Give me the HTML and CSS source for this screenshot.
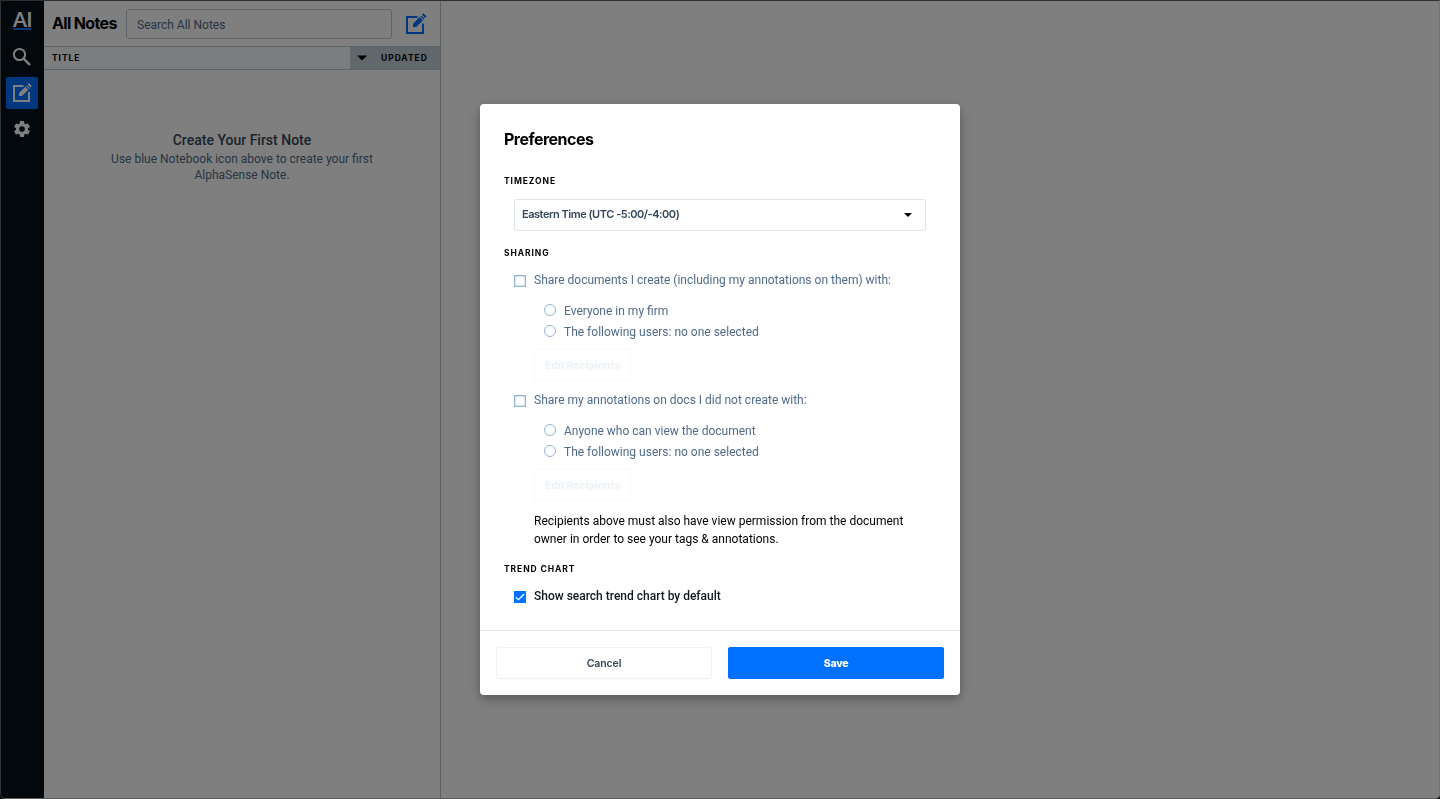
FILE: index.html
```html
<!DOCTYPE html>
<html lang="en">
<head>
<meta charset="utf-8">
<title>Preferences</title>
<link rel="stylesheet" href="styles.css">
</head>
<body>
<div class="app">
  <nav class="rail">
    <div class="logo"><span class="logo-text">AI</span></div>
    <a class="rail-item"><svg width="20" height="20" viewBox="0 0 20 20" fill="none" stroke="#fff" stroke-width="2"><circle cx="7.500" cy="7.500" r="5.600"/><path d="M11.600 11.600L18 18" stroke-width="2.400"/></svg></a>
    <a class="rail-item active"><svg width="20" height="20" viewBox="0 0 20 20"><path d="M11.500 3H2v15h15V9" fill="none" stroke="#fff" stroke-width="2"/><path d="M7 10v3h3l6.300-6.300-3-3zM14 3l3 3 .8-.8-3-3zM15.600 1.500l3 3 .8-.9c.3-.3.300-.7 0-1l-2-2c-.3-.3-.7-.3-1 0z" fill="#fff"/></svg></a>
    <a class="rail-item"><svg width="20" height="20" viewBox="0 0 24 24"><path fill="#fff" d="M19.140 12.940c.04-.3.060-.61.060-.94s-.02-.64-.07-.94l2.030-1.580a.49.49 0 0 0 .12-.61l-1.920-3.320a.488.488 0 0 0-.59-.22l-2.390.96c-.5-.38-1.030-.7-1.620-.94l-.36-2.540a.484.484 0 0 0-.48-.41h-3.840c-.24 0-.43.17-.47.41l-.36 2.540c-.59.24-1.130.57-1.620.94l-2.390-.96c-.22-.08-.47 0-.59.22L2.740 8.870c-.12.21-.08.47.12.61l2.030 1.580c-.05.3-.09.63-.09.94s.02.64.07.94l-2.030 1.580a.49.49 0 0 0-.12.61l1.920 3.320c.12.22.37.29.59.22l2.390-.96c.5.38 1.030.7 1.620.94l.36 2.540c.05.24.24.41.48.41h3.840c.24 0 .44-.17.47-.41l.36-2.540c.59-.24 1.130-.56 1.620-.94l2.390.96c.22.08.47 0 .59-.22l1.920-3.320c.12-.22.070-.47-.12-.61zM12 15.400a3.400 3.400 0 1 1 0-6.800 3.400 3.400 0 0 1 0 6.800z"/></svg></a>
  </nav>
  <section class="notes">
    <header class="notes-head">
      <h1 class="notes-title">All Notes</h1>
      <div class="search">Search All Notes</div>
      <svg class="compose" width="22" height="22" viewBox="0 0 22 22"><path d="M12.500 4H2v16h16v-9.500" fill="none" stroke="#0070ff" stroke-width="2"/><path d="M8 10.700V14h3.300l6.600-6.600-3.300-3.300zM15.300 3.400l3.300 3.300.9-.9-3.300-3.300zM17 1.700L20.300 5l.9-.9c.3-.3.3-.7 0-1L18.900.8c-.3-.3-.7-.3-1 0z" fill="#0070ff"/></svg>
    </header>
    <div class="columns">
      <div class="col-title">TITLE</div>
      <div class="col-updated"><svg width="10" height="6" viewBox="0 0 10 6"><path d="M0 .5h10L5 5.500z" fill="#000"/></svg><span>UPDATED</span></div>
    </div>
    <div class="empty">
      <div class="empty-title">Create Your First Note</div>
      <div class="empty-text">Use blue Notebook icon above to create your first<br>AlphaSense Note.</div>
    </div>
  </section>
  <main class="content"></main>
</div>
<div class="overlay">
  <div class="modal">
    <div class="modal-body">
      <h2 class="modal-title">Preferences</h2>
      <h3 class="label label-first">TIMEZONE</h3>
      <div class="select"><span>Eastern Time (UTC -5:00/-4:00)</span><svg width="8" height="4" viewBox="0 0 8 4"><path d="M0 0h8L4 4z"/></svg></div>
      <h3 class="label">SHARING</h3>
      <div class="check-row"><span class="box"></span>Share documents I create (including my annotations on them) with:</div>
      <div class="options">
        <div class="radio-row"><span class="radio"></span>Everyone in my firm</div>
        <div class="radio-row"><span class="radio"></span>The following users: no one selected</div>
      </div>
      <div class="edit">Edit Recipients</div>
      <div class="check-row second"><span class="box"></span>Share my annotations on docs I did not create with:</div>
      <div class="options">
        <div class="radio-row"><span class="radio"></span>Anyone who can view the document</div>
        <div class="radio-row"><span class="radio"></span>The following users: no one selected</div>
      </div>
      <div class="edit">Edit Recipients</div>
      <p class="hint">Recipients above must also have view permission from the document<br>owner in order to see your tags &amp; annotations.</p>
      <h3 class="label label-trend">TREND CHART</h3>
      <div class="check-row strong"><span class="box checked"><svg width="12" height="12" viewBox="0 0 12 12" fill="none" stroke="#fff" stroke-width="1.300"><path d="M1.800 6.200l2.700 2.500L10.200 3"/></svg></span>Show search trend chart by default</div>
    </div>
    <footer class="modal-foot">
      <div class="btn">Cancel</div>
      <div class="btn primary">Save</div>
    </footer>
  </div>
</div>
<div class="frame"></div>
</body>
</html>
```
FILE: styles.css
```css
* { box-sizing: border-box; }
body { margin: 0; height: 799px; overflow: hidden; font: 12px/16px Roboto, sans-serif; color: #000; background: #fff; }
h1, h2, h3, p { margin: 0; }
svg { display: block; flex: none; }
.app { display: flex; height: 799px; }
.rail { width: 44px; background: #061118; display: flex; flex-direction: column; align-items: center; gap: 4px; padding-top: 9px; }
.logo { height: 28px; }
.logo-text { display: block; width: 18px; height: 21px; border-bottom: 2px solid #0070ff; color: #fff; font: 700 20px/20px Lato, sans-serif; letter-spacing: -.5px; text-align: center; }
.rail-item { width: 32px; height: 32px; border-radius: 2px; display: flex; align-items: center; justify-content: center; }
.active { background: #0070ff; }
.notes { width: 397px; border-right: 1px solid #b5c4cc; display: flex; flex-direction: column; }
.notes-head { height: 46px; padding: 2px 13px 0 8px; display: flex; align-items: center; }
.notes-title { width: 74px; margin-top: -2px; font: 700 16px/20px Inter, sans-serif; letter-spacing: -.65px; white-space: nowrap; }
.search { width: 266px; height: 30px; border: 1px solid #b5c8d2; border-radius: 3px; padding-left: 10px; line-height: 30px; color: #4f6b8a; }
.compose { margin-left: auto; }
.columns { height: 24px; border: solid #b5c8d2; border-width: 1px 0; display: flex; background: #f8fafe; font: 700 8.500px/22px Inter, sans-serif; letter-spacing: .95px; }
.col-title { flex: 1; padding-left: 8px; }
.col-updated { width: 90px; padding-left: 7px; background: #c0d1d8; display: flex; align-items: center; gap: 14px; }
.empty { margin-top: 62px; text-align: center; color: #4f6b8a; }
.empty-title { font: 500 14px/16px Roboto, sans-serif; color: #34475c; margin-bottom: 3px; }
.content { flex: 1; }
.overlay { position: fixed; inset: 0; background: rgba(0, 0, 0, .5); display: flex; align-items: center; justify-content: center; }
.modal { width: 480px; height: 591px; background: #fff; border-radius: 4px; box-shadow: 0 4px 12px rgba(0, 0, 0, .32); display: flex; flex-direction: column; }
.modal-body { flex: 1; padding: 23px 24px 0; }
.modal-title { font: 700 16px/24px Inter, sans-serif; letter-spacing: -.52px; }
.label { margin-top: 12px; font: 700 8.500px/20px Inter, sans-serif; letter-spacing: .92px; }
.label-first { margin-top: 20px; }
.label-trend { margin-top: 11px; }
.select { margin: 8px 10px 0; height: 32px; border: 1px solid #dee6ec; border-radius: 2px; padding: 0 13px 0 7px; display: flex; align-items: center; justify-content: space-between; color: #34475c; font: 600 11px/28px Inter, sans-serif; letter-spacing: -.47px; }
.select span { height: 30px; }
.select svg { fill: #000; }
.check-row { margin: 7px 0 0 10px; display: flex; align-items: center; gap: 8px; color: #4f6b8a; line-height: 20px; white-space: nowrap; }
.second { margin-top: 9px; }
.strong { color: #101820; font-weight: 500; }
.box { width: 12px; height: 12px; margin-top: 2px; border: 1px solid #8fb3d6; box-shadow: inset 0 0 0 .5px #b3cbe2; }
.checked { background: #0070ff; border: 0; box-shadow: none; }
.options { margin: 11px 0 0 40px; display: flex; flex-direction: column; gap: 1px; }
.radio-row { display: flex; align-items: center; gap: 8px; line-height: 20px; color: #4f6b8a; }
.radio { width: 12px; height: 12px; margin-top: -2px; border: 1px solid #94b5d6; border-radius: 50%; }
.edit { width: 97px; height: 32px; margin: 7px 0 0 30px; border: 1px solid #f7f9fa; border-radius: 2px; text-align: center; color: #eff3f6; font: 800 10.500px/31px Inter, sans-serif; letter-spacing: -.15px; white-space: nowrap; }
.hint { margin: 11px 0 0 30px; line-height: 18px; white-space: nowrap; }
.modal-foot { height: 65px; border-top: 1px solid #dee5ec; padding: 16px; display: flex; gap: 16px; }
.btn { flex: 1; height: 32px; border: 1px solid #eff3f6; border-radius: 2px; text-align: center; color: #34475c; font: 600 10.500px/31px Inter, sans-serif; letter-spacing: -.1px; }
.primary { background: #0070ff; border-color: #0070ff; color: #fff; font-weight: 800; letter-spacing: -.3px; }
.frame { position: fixed; inset: 0; pointer-events: none; border: 1px solid; border-color: #2e2e30 #747474 #5c5c5c #303234; border-radius: 0 0 5px 5px; box-shadow: 0 0 0 8px #000; }
```
